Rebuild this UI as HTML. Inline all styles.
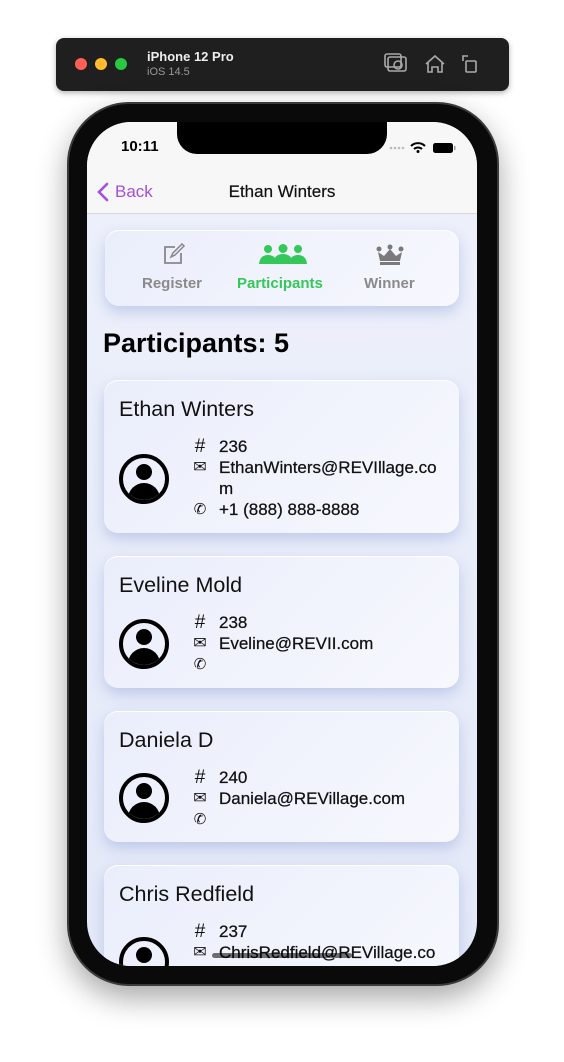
<!DOCTYPE html>
<html><head><meta charset="utf-8"><style>
*{margin:0;padding:0;box-sizing:border-box}
body{width:564px;height:1062px;background:#fff;position:relative;overflow:hidden;font-family:"Liberation Sans",sans-serif}
.bar{position:absolute;left:56px;top:38px;width:453px;height:53px;background:#1f1f1f;border-radius:8px;box-shadow:0 2px 6px rgba(0,0,0,.3)}
.dot{position:absolute;top:20px;width:12px;height:12px;border-radius:50%}
.phone{position:absolute;left:67px;top:102px;width:432px;height:884px;background:#0a0a0a;border-radius:62px;box-shadow:0 12px 30px rgba(0,0,0,.35);border:2px solid #3a3a3a}
.screen{position:absolute;left:87px;top:122px;width:390px;height:844px;border-radius:44px;overflow:hidden;background:linear-gradient(180deg,#eef1fb,#e4e9f8)}
.notch{position:absolute;left:90px;top:0;width:210px;height:32px;background:#000;border-radius:0 0 20px 20px}
.nav{position:absolute;left:0;top:0;width:390px;height:92px;background:#f7f7f8;border-bottom:1px solid #d8d8dc}
.card{position:absolute;left:17px;width:355px;background:linear-gradient(135deg,#eaeefb,#f7f8fe);border-radius:14px;box-shadow:0 6px 14px rgba(140,160,215,.45),inset 0 1px 0 #fff}
.name{position:absolute;left:15px;top:17px;font-size:21.5px;color:#111}
.av{position:absolute;left:15px;width:50px;height:50px;border:4px solid #000;border-radius:50%;overflow:hidden}
.av:before{content:"";position:absolute;left:13px;top:6px;width:16px;height:16px;background:#000;border-radius:50%}
.av:after{content:"";position:absolute;left:5px;top:25px;width:32px;height:24px;background:#000;border-radius:16px 16px 0 0}
.ln{position:absolute;left:115px;font-size:17px;color:#111;line-height:21px;-webkit-text-stroke:.25px #111}
.ic{position:absolute;left:-29px;width:20px;text-align:center;font-size:19px;-webkit-text-stroke:0}
</style></head><body>
<div class="bar">
<div class="dot" style="left:19px;background:#fe5f57"></div>
<div class="dot" style="left:39px;background:#febc2e"></div>
<div class="dot" style="left:59px;background:#28c840"></div>
<div style="position:absolute;left:91px;top:11px;color:#eee;font-weight:bold;font-size:13px">iPhone 12 Pro</div>
<div style="position:absolute;left:91px;top:28px;color:#999;font-size:11px">iOS 14.5</div>
<svg style="position:absolute;left:328px;top:14px" width="100" height="24" fill="none" stroke="#aaa" stroke-width="1.6"><rect x="4" y="5" width="18" height="14" rx="2"/><circle cx="14" cy="13" r="4"/><rect x="1" y="2" width="16" height="13" rx="2"/><path d="M42 12l9-8 9 8M44 11v9h4v-5h6v5h4v-9"/><rect x="82" y="9" width="10" height="11" rx="1"/><path d="M79 9V4h5"/></svg>
</div>
<div class="phone"></div>
<div class="screen">
<div class="nav">
<div style="position:absolute;left:34px;top:16px;font-size:15px;font-weight:bold">10:11</div>
<svg style="position:absolute;left:300px;top:18px" width="75" height="14"><g fill="#bbb"><circle cx="4" cy="8" r="1.3"/><circle cx="8" cy="8" r="1.3"/><circle cx="12" cy="8" r="1.3"/><circle cx="16" cy="8" r="1.3"/></g><path d="M24 6a10 10 0 0 1 14 0M27 9a6 6 0 0 1 8 0" stroke="#000" stroke-width="2" fill="none"/><circle cx="31" cy="11.5" r="1.5"/><rect x="46" y="3" width="20" height="10" rx="2.5"/><rect x="67" y="6" width="1.5" height="4" fill="#999"/></svg>
<svg style="position:absolute;left:9px;top:60px" width="14" height="20"><path d="M11 2L3 10l8 8" stroke="#a64fd8" stroke-width="2.6" fill="none" stroke-linecap="round"/></svg>
<div style="position:absolute;left:28px;top:60px;font-size:17px;color:#a64fd8">Back</div>
<div style="position:absolute;left:0;width:390px;top:60px;text-align:center;font-size:17px;color:#111;-webkit-text-stroke:.2px #111">Ethan Winters</div>
<div class="notch"></div>
</div>
<div class="card" style="top:108px;height:76px;left:18px;width:354px">
<svg style="position:absolute;left:56px;top:13px" width="26" height="24" fill="none" stroke="#888" stroke-width="1.8"><path d="M14 4H4v16h16V10"/><path d="M10 14l2-4 9-9 2 2-9 9z" stroke-width="1.5"/></svg>
<div style="position:absolute;left:37px;top:45px;font-size:15px;font-weight:bold;color:#8a8a8a">Register</div>
<svg style="position:absolute;left:154px;top:14px" width="48" height="22" fill="#34c759"><circle cx="9" cy="5" r="4"/><circle cx="24" cy="4.5" r="4.5"/><circle cx="39" cy="5" r="4"/><path d="M0 20q1-9 9-9 8 0 9 9zM14 20q1-10 10-10 9 0 10 10zM30 20q1-9 9-9 8 0 9 9z"/></svg>
<div style="position:absolute;left:132px;top:45px;font-size:15px;font-weight:bold;color:#34c759">Participants</div>
<svg style="position:absolute;left:270px;top:14px" width="30" height="22" fill="#7a7a7a"><circle cx="4" cy="5" r="2.5"/><circle cx="15" cy="3" r="2.5"/><circle cx="26" cy="5" r="2.5"/><path d="M3 8l6 4 6-7 6 7 6-4-2 9H5z"/><rect x="5" y="18" width="20" height="3"/></svg>
<div style="position:absolute;left:259px;top:45px;font-size:15px;font-weight:bold;color:#8a8a8a">Winner</div>
</div>
<div style="position:absolute;left:16px;top:206px;font-size:27px;font-weight:bold;color:#000">Participants: 5</div>

<div class="card" style="top:258px;height:153px">
<div class="name">Ethan Winters</div>
<div class="av" style="top:74px"></div>
<div class="ln" style="top:56px"><span class="ic">#</span>236</div>
<div class="ln" style="top:77px"><span class="ic" style="font-size:16px">✉</span>EthanWinters@REVIllage.co<br>m</div>
<div class="ln" style="top:119px"><span class="ic" style="font-size:15px">✆</span>+1 (888) 888-8888</div>
</div>
<div class="card" style="top:434px;height:132px">
<div class="name">Eveline Mold</div>
<div class="av" style="top:63px"></div>
<div class="ln" style="top:56px"><span class="ic">#</span>238</div>
<div class="ln" style="top:77px"><span class="ic" style="font-size:16px">✉</span>Eveline@REVII.com</div>
<div class="ln" style="top:98px"><span class="ic" style="font-size:15px">✆</span></div>
</div>
<div class="card" style="top:589px;height:131px">
<div class="name">Daniela D</div>
<div class="av" style="top:62px"></div>
<div class="ln" style="top:56px"><span class="ic">#</span>240</div>
<div class="ln" style="top:77px"><span class="ic" style="font-size:16px">✉</span>Daniela@REVillage.com</div>
<div class="ln" style="top:98px"><span class="ic" style="font-size:15px">✆</span></div>
</div>
<div class="card" style="top:743px;height:140px">
<div class="name">Chris Redfield</div>
<div class="av" style="top:72px"></div>
<div class="ln" style="top:56px"><span class="ic">#</span>237</div>
<div class="ln" style="top:77px"><span class="ic" style="font-size:16px">✉</span>ChrisRedfield@REVillage.co</div>
</div>
<div style="position:absolute;left:125px;top:831px;width:140px;height:5px;border-radius:3px;background:rgba(0,0,0,.55)"></div>
</div>
</body></html>
